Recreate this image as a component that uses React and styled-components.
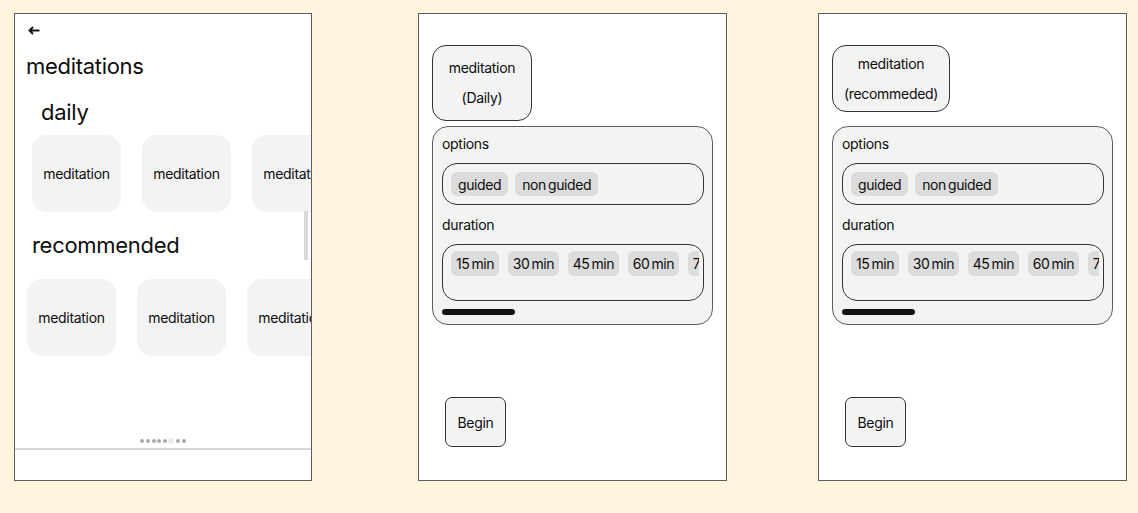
import React from 'react'
import styled, { createGlobalStyle } from 'styled-components'

const GlobalStyle = createGlobalStyle`
  body {
    margin: 0;
    background: #fff5df;
    font-family: Inter, "Noto Sans", sans-serif;
    color: #0d0d0d;
  }
`

const Board = styled.div`
  display: flex;
  align-items: flex-start;
  box-sizing: border-box;
  height: 513px;
  padding: 13px 0 0 14px;
`

const Phone = styled.div`
  position: relative;
  box-sizing: border-box;
  display: flex;
  flex-direction: column;
  width: ${p => p.$w}px;
  height: 468px;
  margin-left: ${p => p.$gap || 0}px;
  background: #fff;
  border: 1px solid #5e5e5e;
  overflow: hidden;
`

const Back = styled.svg`
  display: block;
  width: 12px;
  height: 9px;
  margin: 12px 0 0 13px;
`

const Title = styled.div`
  margin: 17px 0 0 11px;
  font-size: 22px;
  line-height: 28px;
  letter-spacing: -0.3px;
`

const Section = styled.div`
  margin: ${p => p.$mt}px 0 0 ${p => p.$indent}px;
  font-size: 22px;
  line-height: 28px;
  letter-spacing: -0.3px;
`

const CardRow = styled.div`
  display: flex;
  gap: 21px;
  margin: ${p => p.$mt}px 0 0 ${p => p.$indent}px;
`

const Card = styled.div`
  flex: 0 0 auto;
  display: flex;
  align-items: center;
  justify-content: center;
  width: 89px;
  height: 77px;
  border-radius: 15px;
  background: #f3f3f3;
  font-size: 14px;
  letter-spacing: -0.3px;
`

const ScrollThumb = styled.div`
  position: absolute;
  left: 289px;
  top: 197px;
  width: 4px;
  height: 49px;
  background: #d9d9d9;
`

const Dots = styled.div`
  display: flex;
  align-items: center;
  justify-content: center;
  gap: 1.6px;
  height: 6px;
  margin-top: 82px;
`

const Dot = styled.span`
  width: ${p => (p.$light ? 6 : 4)}px;
  height: ${p => (p.$light ? 6 : 4)}px;
  border-radius: 50%;
  background: ${p => (p.$light ? '#ececec' : '#a9a9a9')};
`

const Divider = styled.div`
  height: 2px;
  margin-top: 4px;
  background: #d6d6d6;
`

const Detail = styled.div`
  display: flex;
  flex-direction: column;
  align-items: flex-start;
  padding: 31px 13px 0;
`

const HeaderCard = styled.div`
  box-sizing: border-box;
  display: flex;
  flex-direction: column;
  align-items: center;
  justify-content: center;
  width: ${p => p.$w}px;
  height: ${p => p.$h}px;
  border: 1px solid #333;
  border-radius: 14px;
  background: #f3f3f3;
  font-size: 14px;
  line-height: 30px;
  letter-spacing: -0.3px;
`

const OptionsBox = styled.div`
  box-sizing: border-box;
  width: 281px;
  height: 199px;
  margin-top: ${p => p.$mt}px;
  padding: 7px 8px 0 9px;
  border: 1px solid #5e5e5e;
  border-radius: 16px;
  background: #f3f3f3;
`

const Label = styled.div`
  margin-top: ${p => p.$mt || 0}px;
  font-size: 14px;
  line-height: 20px;
  letter-spacing: -0.3px;
`

const ChipBox = styled.div`
  box-sizing: border-box;
  display: flex;
  align-items: ${p => (p.$top ? 'flex-start' : 'center')};
  height: ${p => p.$h}px;
  margin-top: 9px;
  padding: ${p => (p.$top ? '6px 4px 0 8px' : '0 8px')};
  border: 1px solid #333;
  border-radius: 15px;
  overflow: hidden;
`

const ChipRow = styled.div`
  display: flex;
  gap: ${p => p.$gap}px;
  overflow: hidden;
`

const Chip = styled.span`
  flex: 0 0 auto;
  display: flex;
  align-items: center;
  height: ${p => p.$h || 24}px;
  padding: 0 ${p => p.$px || 7}px;
  border-radius: 6px;
  background: #dcdcdc;
  font-size: 14px;
  letter-spacing: -0.4px;
  word-spacing: -1.5px;
  white-space: nowrap;
`

const Track = styled.div`
  width: 73px;
  height: 6px;
  margin-top: 8px;
  border-radius: 3px;
  background: #111;
`

const Begin = styled.button`
  box-sizing: border-box;
  width: 61px;
  height: 50px;
  margin: 72px 0 0 13px;
  padding: 0;
  border: 1px solid #333;
  border-radius: 7px;
  background: #f3f3f3;
  color: #0d0d0d;
  font-family: inherit;
  font-size: 14px;
  letter-spacing: -0.3px;
`

const durations = ['15 min', '30 min', '45 min', '60 min', '75 min', '90 min']

const DetailScreen = ({ gap, cardW, cardH, kind }) => (
  <Phone $w={309} $gap={gap}>
    <Detail>
      <HeaderCard $w={cardW} $h={cardH}>
        <span>meditation</span>
        <span>{kind}</span>
      </HeaderCard>
      <OptionsBox $mt={81 - cardH}>
        <Label>options</Label>
        <ChipBox $h={42}>
          <ChipRow $gap={7}>
            <Chip>guided</Chip>
            <Chip>non guided</Chip>
          </ChipRow>
        </ChipBox>
        <Label $mt={10}>duration</Label>
        <ChipBox $h={57} $top>
          <ChipRow $gap={8.5}>
            {durations.map(d => (
              <Chip key={d} $h={25} $px={5}>{d}</Chip>
            ))}
          </ChipRow>
        </ChipBox>
        <Track />
      </OptionsBox>
      <Begin>Begin</Begin>
    </Detail>
  </Phone>
)

const App = () => (
  <>
    <GlobalStyle />
    <Board>
      <Phone $w={298}>
        <Back viewBox="0 0 12 9" fill="none">
          <path d="M11.5 4.5H1.5M5 1L1.5 4.5L5 8" stroke="#111" strokeWidth="1.9" />
        </Back>
        <Title>meditations</Title>
        <Section $mt={18} $indent={26}>daily</Section>
        <CardRow $mt={9} $indent={17}>
          <Card>meditation</Card>
          <Card>meditation</Card>
          <Card>meditation</Card>
        </CardRow>
        <Section $mt={19} $indent={17}>recommended</Section>
        <CardRow $mt={20} $indent={12}>
          <Card>meditation</Card>
          <Card>meditation</Card>
          <Card>meditation</Card>
        </CardRow>
        <Dots>
          {[0, 1, 2, 3, 4, 5, 6, 7].map(i => (
            <Dot key={i} $light={i === 5} />
          ))}
        </Dots>
        <Divider />
        <ScrollThumb />
      </Phone>
      <DetailScreen gap={106} cardW={100} cardH={76} kind="(Daily)" />
      <DetailScreen gap={91} cardW={118} cardH={67} kind="(recommeded)" />
    </Board>
  </>
)

export default App
